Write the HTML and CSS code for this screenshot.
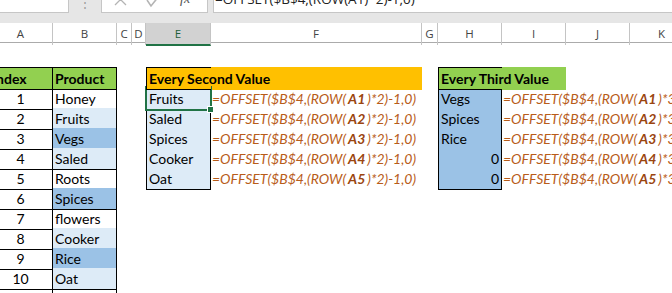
FILE: index.html
```html
<!DOCTYPE html>
<html lang="en">
<head>
  <meta charset="UTF-8">
  <title>OFFSET every n-th value</title>
  <link rel="stylesheet" href="styles.css">
</head>
<body>

<div class="topbar">
  <div class="namebox"></div>
  <div class="grip">&#8942;</div>
  <div class="fxbox">
    <svg class="ico-x" width="14" height="13" viewBox="0 0 14 13">
      <path d="M1 -6 L12 5 M12 -6 L1 5" stroke="#b4b4b4" stroke-width="1.3" fill="none"/>
    </svg>
    <svg class="ico-ok" width="14" height="13" viewBox="0 0 14 13">
      <path d="M1 0 L5 6 L13 -4" stroke="#b4b4b4" stroke-width="1.6" fill="none"/>
    </svg>
    <span class="fx">fx</span>
  </div>
  <div class="fbar"><span>=OFFSET($B$4,(ROW(A1)*2)-1,0)</span></div>
</div>

<div class="sheet">
  <div class="heads">
    <div class="hd">A</div>
    <div class="hd">B</div>
    <div class="hd">C</div>
    <div class="hd">D</div>
    <div class="hd sel">E</div>
    <div class="hd">F</div>
    <div class="hd">G</div>
    <div class="hd">H</div>
    <div class="hd">I</div>
    <div class="hd">J</div>
    <div class="hd">K</div>
  </div>

  <div class="row gap"></div>

  <div class="row top">
    <div class="cell a box green bold left">Index</div>
    <div class="cell b box green bold">Product</div>
    <div class="cell e box-open orange bold">Every Second Value</div>
    <div class="cell f orange"></div>
    <div class="cell h box-open green bold">Every Third Value</div>
    <div class="cell i green"></div>
  </div>

  <div class="row">
    <div class="cell a box">1</div>
    <div class="cell b box">Honey</div>
    <div class="cell e box lt current">Fruits</div>
    <div class="cell f fm">=OFFSET($B$4,(ROW(<b>A1</b>)*2)-1,0)</div>
    <div class="cell h box dk">Vegs</div>
    <div class="cell i fm">=OFFSET($B$4,(ROW(<b>A1</b>)*3)-2,0)</div>
  </div>
  <div class="row">
    <div class="cell a box">2</div>
    <div class="cell b box lt">Fruits</div>
    <div class="cell e box lt">Saled</div>
    <div class="cell f fm">=OFFSET($B$4,(ROW(<b>A2</b>)*2)-1,0)</div>
    <div class="cell h box dk">Spices</div>
    <div class="cell i fm">=OFFSET($B$4,(ROW(<b>A2</b>)*3)-2,0)</div>
  </div>
  <div class="row">
    <div class="cell a box">3</div>
    <div class="cell b box dk">Vegs</div>
    <div class="cell e box lt">Spices</div>
    <div class="cell f fm">=OFFSET($B$4,(ROW(<b>A3</b>)*2)-1,0)</div>
    <div class="cell h box dk">Rice</div>
    <div class="cell i fm">=OFFSET($B$4,(ROW(<b>A3</b>)*3)-2,0)</div>
  </div>
  <div class="row">
    <div class="cell a box">4</div>
    <div class="cell b box lt">Saled</div>
    <div class="cell e box lt">Cooker</div>
    <div class="cell f fm">=OFFSET($B$4,(ROW(<b>A4</b>)*2)-1,0)</div>
    <div class="cell h box dk num">0</div>
    <div class="cell i fm">=OFFSET($B$4,(ROW(<b>A4</b>)*3)-2,0)</div>
  </div>
  <div class="row">
    <div class="cell a box">5</div>
    <div class="cell b box">Roots</div>
    <div class="cell e box lt">Oat</div>
    <div class="cell f fm">=OFFSET($B$4,(ROW(<b>A5</b>)*2)-1,0)</div>
    <div class="cell h box dk num">0</div>
    <div class="cell i fm">=OFFSET($B$4,(ROW(<b>A5</b>)*3)-2,0)</div>
  </div>
  <div class="row">
    <div class="cell a box">6</div>
    <div class="cell b box dk">Spices</div>
  </div>
  <div class="row">
    <div class="cell a box">7</div>
    <div class="cell b box">flowers</div>
  </div>
  <div class="row">
    <div class="cell a box">8</div>
    <div class="cell b box lt">Cooker</div>
  </div>
  <div class="row">
    <div class="cell a box">9</div>
    <div class="cell b box dk">Rice</div>
  </div>
  <div class="row">
    <div class="cell a box">10</div>
    <div class="cell b box lt">Oat</div>
  </div>
  <div class="row">
    <div class="cell a box"></div>
    <div class="cell b box"></div>
  </div>
</div>

</body>
</html>
```

FILE: styles.css
```css
body {
  margin: 0;
  width: 672px;
  height: 293px;
  overflow: hidden;
  background-color: white;
  font-family: Lato, "Open Sans", sans-serif;
  color: #000;
}

/* formula bar, cut at the top */
.topbar {
  display: flex;
  height: 23px;
  background-color: #e6e6e6;
}
.namebox {
  width: 68px;
  height: 12px;
  background-color: white;
  border-right: 1px solid #c6c6c6;
  border-bottom: 1px solid #c6c6c6;
}
.grip {
  width: 32px;
  height: 13px;
  color: #9a9a9a;
  font-size: 12px;
  line-height: 12px;
  text-align: center;
  margin-top: -3px;
}
.fxbox {
  display: flex;
  width: 105px;
  height: 12px;
  background-color: white;
  border: 1px solid #c6c6c6;
  border-top: none;
  overflow: hidden;
}
.ico-x {
  margin-left: 12px;
}
.ico-ok {
  margin-left: 18px;
}
.fx {
  margin-left: 20px;
  margin-top: -8px;
  font-family: "Liberation Serif", serif;
  font-style: italic;
  font-size: 14px;
  line-height: 13px;
  color: #555;
}
.fbar {
  flex: 1;
  height: 12px;
  margin-left: 5px;
  background-color: white;
  border-left: 1px solid #c6c6c6;
  border-bottom: 1px solid #c6c6c6;
  overflow: hidden;
}
.fbar span {
  display: block;
  margin-top: -7px;
  padding-left: 1px;
  font-family: "Open Sans", sans-serif;
  font-size: 13.5px;
  line-height: 13px;
  color: #222;
  white-space: nowrap;
}

/* grid of the sheet, column A starts off screen */
.sheet {
  --cols: 64px 64px 15px 14px 65px 211px 16px 64px 64px 64px 64px;
  margin-left: -11px;
}
.heads, .row {
  display: grid;
  grid-template-columns: var(--cols);
}
.heads {
  height: 20px;
  box-sizing: border-box;
  border-bottom: 1px solid #ababab;
}
.hd {
  border-right: 1px solid #c4c4c4;
  font-family: "Open Sans", sans-serif;
  font-size: 11.5px;
  line-height: 22px;
  text-align: center;
  color: #444;
}
.hd.sel {
  background-color: #d2d2d2;
  border-bottom: 2px solid #217346;
  margin-bottom: -1px;
  color: #1f5e3a;
  line-height: 21px;
}

.row {
  height: 20px;
}
.row.gap {
  height: 24px;
}
.row.top {
  height: 21px;
}

.cell {
  box-sizing: border-box;
  padding: 0 2px;
  font-size: 14px;
  line-height: 21px;
  white-space: nowrap;
}
.a { grid-column: 1; text-align: center; }
.b { grid-column: 2; }
.e { grid-column: 5; }
.f { grid-column: 6; }
.h { grid-column: 8; }
.i { grid-column: 9; }

.cell.left {
  text-align: left;
  padding-left: 3px;
}
.cell.num {
  text-align: right;
}
.bold {
  font-weight: bold;
}

.box {
  border-right: 1px solid #000;
  border-bottom: 1px solid #000;
}
.e.box, .h.box {
  border-left: 1px solid #000;
}
.row.top .box {
  border-top: 1px solid #000;
}
/* header cell whose title spills into the next column */
.box-open {
  position: relative;
  z-index: 1;
  border-top: 1px solid #000;
  border-left: 1px solid #000;
  border-bottom: 1px solid #000;
}

.green { background-color: #92d050; }
.orange { background-color: #ffc000; }
.lt { background-color: #ddebf7; }
.dk { background-color: #9bc2e6; }

.fm {
  padding-left: 1px;
  font-style: italic;
  color: #b85c19;
}
.fm b {
  margin: 0 2px;
  color: #9a4510;
}

/* active cell */
.current {
  position: relative;
}
.current::after {
  content: "";
  position: absolute;
  top: -2px;
  left: -2px;
  right: -2px;
  bottom: -2px;
  border: 2px solid #217346;
}
.current::before {
  content: "";
  position: absolute;
  right: -4px;
  bottom: -4px;
  width: 5px;
  height: 5px;
  background-color: #217346;
  border: 1px solid white;
  z-index: 1;
}
```
